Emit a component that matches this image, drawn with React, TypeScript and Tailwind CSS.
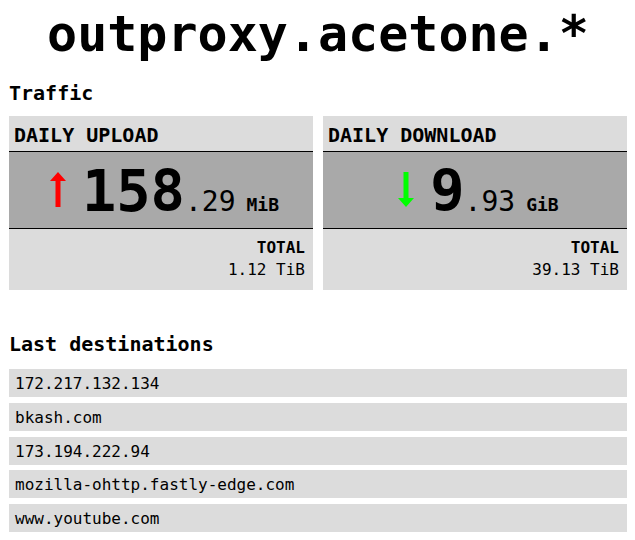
import React from 'react';

const mono = { fontFamily: '"DejaVu Sans Mono", "Liberation Mono", monospace' };

type Stat = {
  title: string;
  direction: 'up' | 'down';
  whole: string;
  fraction: string;
  unit: string;
  total: string;
};

const stats: Stat[] = [
  { title: 'DAILY UPLOAD', direction: 'up', whole: '158', fraction: '.29', unit: 'MiB', total: '1.12 TiB' },
  { title: 'DAILY DOWNLOAD', direction: 'down', whole: '9', fraction: '.93', unit: 'GiB', total: '39.13 TiB' },
];

const destinations = [
  '172.217.132.134',
  'bkash.com',
  '173.194.222.94',
  'mozilla-ohttp.fastly-edge.com',
  'www.youtube.com',
];

function Arrow({ direction }: { direction: 'up' | 'down' }) {
  if (direction === 'up') {
    return (
      <svg width="16" height="35" viewBox="0 0 16 35" className="self-start mt-[9px] ml-[7px] mr-[16px] shrink-0">
        <polygon points="8,0 16,9 10.5,9 10.5,35 5.5,35 5.5,9 0,9" fill="#ff0000" />
      </svg>
    );
  }
  return (
    <svg width="16" height="35" viewBox="0 0 16 35" className="self-start mt-[9px] ml-[7px] mr-[16px] shrink-0">
      <polygon points="8,35 16,26 10.5,26 10.5,0 5.5,0 5.5,26 0,26" fill="#00ff00" />
    </svg>
  );
}

function StatCard({ stat }: { stat: Stat }) {
  return (
    <div className="bg-[#dcdcdc] text-black">
      <div className="h-[35px] pt-[7px] pl-[5px] text-[20px] leading-[24px] font-bold">{stat.title}</div>
      <div className="h-[78px] border-y border-black bg-[#a9a9a9] pt-[11px] flex items-baseline justify-center">
        <Arrow direction={stat.direction} />
        <span className="text-[57px] leading-none font-bold">{stat.whole}</span>
        <span className="text-[28px] leading-none">{stat.fraction}</span>
        <span className="ml-[11px] text-[18px] leading-none font-bold">{stat.unit}</span>
      </div>
      <div className="h-[61px] pt-[8px] pr-2 text-right text-[16px] leading-[22px]">
        <div className="font-bold">TOTAL</div>
        <div>{stat.total}</div>
      </div>
    </div>
  );
}

export default function App() {
  return (
    <div className="min-h-screen bg-white text-black pl-[9px] pr-[8px]" style={mono}>
      <h1 className="pt-[4px] text-center text-[50px] leading-[60px] font-bold">outproxy.acetone.*</h1>

      <h2 className="mt-[17px] text-[20px] leading-[24px] font-bold">Traffic</h2>
      <div className="mt-[11px] grid grid-cols-2 gap-[10px]">
        {stats.map((s) => (
          <StatCard key={s.title} stat={s} />
        ))}
      </div>

      <h2 className="mt-[42px] text-[20px] leading-[24px] font-bold">Last destinations</h2>
      <ul className="mt-[13px] flex flex-col gap-[5.75px]">
        {destinations.map((d) => (
          <li key={d} className="h-[28px] bg-[#dcdcdc] pl-[6px] pt-[2px] text-[16px] leading-[26px]">
            {d}
          </li>
        ))}
      </ul>
    </div>
  );
}
